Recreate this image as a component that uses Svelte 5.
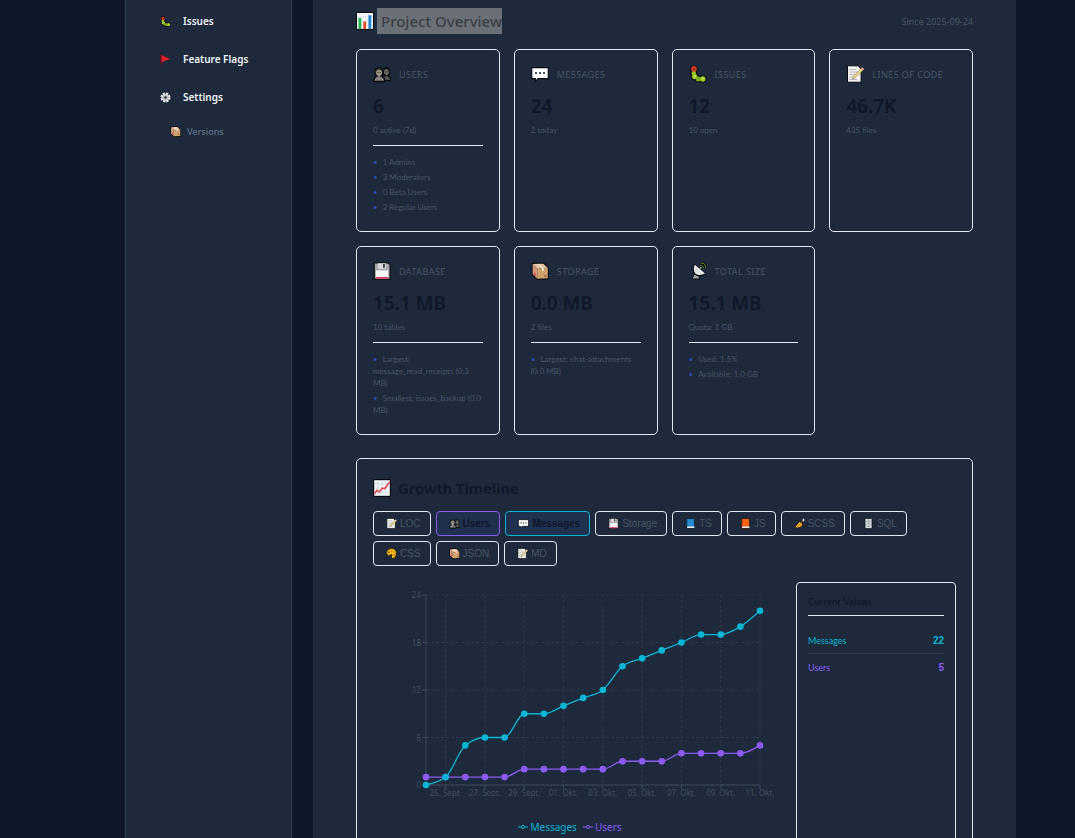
<script>
  const nav = [
    { icon: 'bug', label: 'Issues' },
    { icon: 'flag', label: 'Feature Flags' },
    { icon: 'gear', label: 'Settings' }
  ];

  const stats = [
    { icon: 'users', label: 'Users', value: '6', note: '0 active (7d)', items: ['1 Admins', '3 Moderators', '0 Beta Users', '2 Regular Users'] },
    { icon: 'speech', label: 'Messages', value: '24', note: '2 today', items: [] },
    { icon: 'bug', label: 'Issues', value: '12', note: '10 open', items: [] },
    { icon: 'memo', label: 'Lines of Code', value: '46.7K', note: '435 files', items: [] },
    { icon: 'floppy', label: 'Database', value: '15.1 MB', note: '10 tables', items: ['Largest: message_read_receipts (0.3 MB)', 'Smallest: issues_backup (0.0 MB)'] },
    { icon: 'box', label: 'Storage', value: '0.0 MB', note: '2 files', items: ['Largest: chat-attachments (0.0 MB)'] },
    { icon: 'dish', label: 'Total Size', value: '15.1 MB', note: 'Quota: 1 GB', items: ['Used: 1.5%', 'Available: 1.0 GB'] }
  ];

  let filters = $state([
    { icon: 'memo', label: 'LOC', on: false },
    { icon: 'users', label: 'Users', on: true, tone: 'violet' },
    { icon: 'speech', label: 'Messages', on: true, tone: 'cyan' },
    { icon: 'floppy', label: 'Storage', on: false },
    { icon: 'bluebook', label: 'TS', on: false },
    { icon: 'orangebook', label: 'JS', on: false },
    { icon: 'brush', label: 'SCSS', on: false },
    { icon: 'cabinet', label: 'SQL', on: false },
    { icon: 'palette', label: 'CSS', on: false },
    { icon: 'box', label: 'JSON', on: false },
    { icon: 'memo', label: 'MD', on: false }
  ]);

  const left = 53;
  const right = 387;
  const top = 13;
  const bottom = 203;
  const px = (i) => left + (i * (right - left)) / 17;
  const py = (v) => bottom - (v * (bottom - top)) / 24;

  const messages = [0, 1, 5, 6, 6, 9, 9, 10, 11, 12, 15, 16, 17, 18, 19, 19, 20, 22];
  const users = [1, 1, 1, 1, 1, 2, 2, 2, 2, 2, 3, 3, 3, 4, 4, 4, 4, 5];
  const series = [
    { name: 'Users', color: '#8b5cf6', points: users },
    { name: 'Messages', color: '#06b6d4', points: messages }
  ];
  const totals = [
    { name: 'Messages', color: '#06b6d4', value: 22 },
    { name: 'Users', color: '#8b5cf6', value: 5 }
  ];
  const yTicks = [0, 6, 12, 18, 24];
  const xTicks = ['25. Sept.', '27. Sept.', '29. Sept.', '01. Okt.', '03. Okt.', '05. Okt.', '07. Okt.', '09. Okt.', '11. Okt.'];

  // Monotone cubic interpolation, so flat stretches never overshoot.
  function curve(values) {
    const n = values.length;
    const h = px(1) - px(0);
    const ys = values.map(py);
    const s = ys.slice(1).map((y, i) => (y - ys[i]) / h);
    const m = ys.map((_, i) => {
      if (i === 0 || i === n - 1) return 0;
      const a = s[i - 1];
      const b = s[i];
      return (Math.sign(a) + Math.sign(b)) * Math.min(Math.abs(a), Math.abs(b), Math.abs(a + b) / 4);
    });
    m[0] = (3 * s[0] - m[1]) / 2;
    m[n - 1] = (3 * s[n - 2] - m[n - 2]) / 2;
    let d = `M${px(0)},${ys[0]}`;
    for (let i = 1; i < n; i++) {
      d += `C${px(i - 1) + h / 3},${ys[i - 1] + (m[i - 1] * h) / 3} ${px(i) - h / 3},${ys[i] - (m[i] * h) / 3} ${px(i)},${ys[i]}`;
    }
    return d;
  }
</script>

{#snippet glyph(name)}
  <svg class="glyph" viewBox="0 0 18 18" aria-hidden="true">
    {#if name === 'bug'}
      <g stroke="#0b0f14" stroke-width="2">
        <circle cx="5" cy="4" r="2.8" /><circle cx="4.8" cy="8" r="2.6" /><circle cx="5.6" cy="11.8" r="2.7" /><circle cx="9.2" cy="14" r="2.6" /><circle cx="13.8" cy="14" r="2.7" />
      </g>
      <circle cx="4.8" cy="8" r="2.3" fill="#8fbf26" /><circle cx="5.6" cy="11.6" r="2.6" fill="#a5cf2e" /><circle cx="9.3" cy="14" r="2.5" fill="#7fae1d" /><circle cx="13.8" cy="14" r="2.7" fill="#9bcb2b" />
      <circle cx="5" cy="4" r="2.8" fill="#e5402b" /><circle cx="5.2" cy="4.2" r="1" fill="#571812" /><path d="M3 1.6L4 2.4M7 1.4L6 2.4" stroke="#d9402b" stroke-width=".8" />
      <circle cx="6" cy="11.2" r=".8" fill="#d8ef72" /><circle cx="13.9" cy="13.5" r=".9" fill="#d2ec65" />
    {:else if name === 'flag'}
      <path d="M1.4 1v16" stroke="#0b0f14" stroke-width="2.6" /><path d="M2 1.5L17 8L2 14z" fill="#dc2331" stroke="#5c1825" stroke-width=".6" /><path d="M1.7 1v16" stroke="#a71926" stroke-width="1.5" />
    {:else if name === 'gear'}
      <circle cx="9" cy="9" r="7" fill="#c9cdd0" stroke="#0b0f14" stroke-width="1" />
      <circle cx="9" cy="9" r="6.8" fill="none" stroke="#e2e4e6" stroke-width="3" stroke-dasharray="3.6 1.74" />
      <circle cx="9" cy="9" r="4" fill="none" stroke="#b6bbbf" stroke-width="1" /><circle cx="9" cy="9" r="2" fill="#18212d" />
    {:else if name === 'box'}
      <path d="M1.2 1.4L12.6 1.2L17 5.8V16.8L6.2 17.2L1.2 12.4z" fill="#0b0f14" stroke="#0b0f14" stroke-width="1.4" stroke-linejoin="round" />
      <path d="M1.6 2L12.2 1.7L16.8 6L6.2 6.8z" fill="#e8c4a5" /><path d="M1.6 2L6.2 6.8V16.8L1.6 12z" fill="#d09a7a" /><path d="M6.2 6.8L16.8 6V16.3L6.2 16.8z" fill="#cfa270" />
      <path d="M6.2 1.9L11 6.4V9L12.8 8.8V6.3L8 1.8z" fill="#f3dfd0" /><path d="M3 10l2 2v2.6l-2-2z" fill="#d8505a" /><path d="M13 14h2.6" stroke="#77502e" />
    {:else if name === 'bars'}
      <rect x=".5" y=".5" width="17" height="17" fill="#f4f8fa" stroke="#080b10" />
      <path d="M1 5h16M1 9h16M1 13h16" stroke="#c8dce4" stroke-width=".7" />
      <path d="M2.5 6h2.8v11H2.5z" fill="#23b34b" /><path d="M7.3 9.5h2.8V17H7.3z" fill="#e34a2f" /><path d="M12.4 3.2h2.9V17h-2.9z" fill="#2587cf" />
    {:else if name === 'users'}
      <path d="M9.4 15.6c.1-3.4 1-4.4 2.8-5.1-2.8-2.2-2.2-7.8 1-7.8 3.7 0 4.6 5.6 1.7 7.8 2 .6 2.8 1.9 2.8 5.1z" fill="#55534f" stroke="#080a0d" stroke-width="1.4" />
      <path d="M.7 16.5c.1-3.4 1-4.6 3.2-5.4C.6 8.4 1.6 2.8 6 2.8s5.2 5.6 2.2 8.3c2.4.8 3.6 2 3.7 5.4z" fill="#85837f" stroke="#080a0d" stroke-width="1.5" />
      <path d="M2.8 6.8C3 3 9 3 9.2 6.8" fill="none" stroke="#2f2f2e" stroke-width="1.6" />
      <circle cx="6" cy="7.8" r="2.8" fill="#9b9687" /><circle cx="13.4" cy="7.2" r="2.4" fill="#696962" /><path d="M4.2 7.4h1.2m1.3 0h1.1M12 6.9h.8m1.2 0h1" stroke="#24272a" />
    {:else if name === 'speech'}
      <path d="M.7 2.7h16.6v11H7L4.3 16.5V13.7H.7z" fill="#fff" stroke="#080b10" stroke-width="1.2" />
      <circle cx="5" cy="8" r="1" fill="#11151c" /><circle cx="9" cy="8" r="1" fill="#11151c" /><circle cx="13" cy="8" r="1" fill="#11151c" />
    {:else if name === 'memo'}
      <path d="M1.5.8h10.6l3 3.2v13.2H1.5z" fill="#f6f4f3" stroke="#080b10" />
      <path d="M3.2 4.5h7.3M3.2 7h9M3.2 9.5h7M3.2 12h5M3.2 14.5h8" stroke="#aaa8b0" stroke-width=".8" />
      <path d="M6.3 14l1.1-3.1L15.5 3l2 1.7L9.2 12.9z" fill="#e7d389" stroke="#72653e" stroke-width=".4" /><path d="M15.2 3.3l1-1 2 1.7-1 1z" fill="#e2a1a1" />
    {:else if name === 'floppy'}
      <path d="M1.2 1h14.3l1.6 1.8v14.4H1.2z" fill="#aaa9ad" stroke="#080b10" stroke-width="1.2" />
      <path d="M5 1.3h8v5.4H5z" fill="#d8d8da" /><path d="M10 2h1.9v3.7H10z" fill="#363b42" /><path d="M3 8.4h12.2v8H3z" fill="#f8f5f5" /><path d="M3 15h12.2v1.7H3z" fill="#d83a63" />
    {:else if name === 'dish'}
      <path d="M3 17L5 12l4.5 1 1.3 4z" fill="#9aa0a3" stroke="#080b10" />
      <path d="M5.2 2.6L15.8 12c-2.6 2-7 2.3-9.6.2C3.8 10 3.8 5.4 5.2 2.6z" fill="#e3e5e6" stroke="#080b10" stroke-width="1.1" />
      <path d="M5.6 3.4L15.3 11.8" stroke="#fff" stroke-width="1.2" /><path d="M10.3 7.5L12.5 5" stroke="#c0c4c6" />
      <path d="M11.4 3.6c1.8-.3 3 .9 2.8 2.6M11.8 1.2c3.2-.5 5.2 1.6 4.9 4.8" fill="none" stroke="#0b0f14" stroke-width="2.4" />
      <path d="M11.4 3.6c1.8-.3 3 .9 2.8 2.6M11.8 1.2c3.2-.5 5.2 1.6 4.9 4.8" fill="none" stroke="#628d24" stroke-width="1" />
    {:else if name === 'growth'}
      <rect x=".6" y=".6" width="16.8" height="16.8" fill="#f5f7f7" stroke="#080b10" stroke-width="1.2" />
      <path d="M1 5h16M1 9h16M1 13h16M5 1v16M9 1v16M13 1v16" stroke="#c5d9df" stroke-width=".7" />
      <path d="M1.4 14.7L4 11.3 6.3 13 9.2 9.1l2.3.7L16.7 3" fill="none" stroke="#e24450" stroke-width="1.5" />
    {:else if name === 'bluebook' || name === 'orangebook'}
      <path d="M2.5 1h13v16H2.5z" fill={name === 'bluebook' ? '#278bd0' : '#f36313'} stroke="#0b1119" /><path d="M3.5 13.8h12v2.6h-12z" fill="#e4e9ed" /><path d="M3.8 1.7v12" stroke={name === 'bluebook' ? '#1b659f' : '#b9430d'} stroke-width="1.2" />
    {:else if name === 'brush'}
      <path d="M10 8l5-6 1.8 1.3-4.7 6z" fill="#ad6b35" stroke="#0b0f14" /><path d="M14.2 1.2h2.6v4h-2.3z" fill="#e5e8e9" />
      <path d="M.8 15.6L9 5.6 14.4 9.8c-.5 5-6 7.6-13.6 5.8z" fill="#f5b323" stroke="#0b0f14" stroke-width="1.2" /><path d="M5 14.6l5.4-5.2M8.3 15l4-4" stroke="#9b6d17" stroke-width=".9" />
    {:else if name === 'cabinet'}
      <path d="M3.4.8h11.3v16.4H3.4z" fill="#d6dadd" stroke="#080b10" /><path d="M4.6 5.8h9M4.6 11h9" stroke="#9ba3a8" stroke-width="1" /><path d="M7.7 3.4h3M7.7 8.4h3M7.7 13.7h3" stroke="#656e75" stroke-width="1.2" />
    {:else if name === 'palette'}
      <path d="M1 8C1 3.8 4.8 1 9.5 1 14 1 17 4 17 8c0 5-2.4 9-5.6 9-2.6 0-3.2-2-1.8-4.2 1-1.5-.8-3-2.5-1.5C5 13.4 1 11.6 1 8z" fill="#fbb913" stroke="#0b0f14" />
      <circle cx="5" cy="7" r="1.2" fill="#303a53" /><circle cx="9" cy="4.4" r="1" fill="#df6e31" /><circle cx="13.3" cy="6.4" r="1.1" fill="#6c9d37" /><circle cx="13.5" cy="11" r="1.2" fill="#785a26" />
    {/if}
  </svg>
{/snippet}

<div class="shell">
  <nav class="sidebar">
    {#each nav as item}
      <a class="link" href="#{item.icon}">{@render glyph(item.icon)}<span>{item.label}</span></a>
    {/each}
    <a class="link sub" href="#versions">{@render glyph('box')}<span>Versions</span></a>
  </nav>

  <main>
    <header>
      <h1>{@render glyph('bars')}<span>Project Overview</span></h1>
      <span class="since">Since 2025-09-24</span>
    </header>

    <section class="stats">
      {#each stats as stat}
        <article class="card">
          <h2>{@render glyph(stat.icon)}<span>{stat.label}</span></h2>
          <p class="value">{stat.value}</p>
          <p class="note">{stat.note}</p>
          {#if stat.items.length}
            <ul>
              {#each stat.items as line}<li>{line}</li>{/each}
            </ul>
          {/if}
        </article>
      {/each}
    </section>

    <section class="card timeline">
      <h3>{@render glyph('growth')}<span>Growth Timeline</span></h3>
      <div class="filters">
        {#each filters as f}
          <button type="button" class={f.on ? `on ${f.tone ?? ''}` : ''} aria-pressed={f.on} onclick={() => (f.on = !f.on)}>
            {@render glyph(f.icon)}<span>{f.label}</span>
          </button>
        {/each}
      </div>

      <div class="body">
        <div class="plot">
          <svg class="chart" viewBox="0 0 408 222" role="img" aria-label="Growth of messages and users">
            <g class="grid">
              {#each yTicks as t}<path d="M{left},{py(t)}H{right}" />{/each}
              {#each xTicks as _, i}<path d="M{px(i * 2 + 1)},{top}V{bottom}" />{/each}
            </g>
            <g class="axis">
              <path d="M{left},{top}V{bottom}H{right}" />
              {#each yTicks as t}<path d="M{left - 4},{py(t)}H{left}" />{/each}
              {#each xTicks as _, i}<path d="M{px(i * 2 + 1)},{bottom}v4" />{/each}
            </g>
            <g class="ticks">
              {#each yTicks as t}<text x={left - 5} y={py(t) + 3} text-anchor="end">{t}</text>{/each}
              {#each xTicks as t, i}<text x={px(i * 2 + 1)} y={bottom + 11} text-anchor="middle">{t}</text>{/each}
            </g>
            {#each series as s}
              <path d={curve(s.points)} fill="none" stroke={s.color} stroke-width="1.3" />
              {#each s.points as v, i}<circle cx={px(i)} cy={py(v)} r="3.3" fill={s.color} />{/each}
            {/each}
          </svg>
          <div class="legend">
            {#each totals as t}
              <span style:color={t.color}>
                <svg viewBox="0 0 10 10" aria-hidden="true"><path d="M0 5h3M7 5h3" stroke="currentColor" /><circle cx="5" cy="5" r="1.6" fill="none" stroke="currentColor" /></svg>{t.name}
              </span>
            {/each}
          </div>
        </div>

        <aside>
          <h4>Current Values</h4>
          <dl>
            {#each totals as t}
              <div style:color={t.color}><dt>{t.name}</dt><dd>{t.value}</dd></div>
            {/each}
          </dl>
        </aside>
      </div>
    </section>
  </main>
</div>

<style>
  :global(body) {
    margin: 0;
    background: #0f172a;
  }
  .shell {
    box-sizing: border-box;
    display: grid;
    grid-template-columns: 167px minmax(0, 1fr);
    gap: 21px;
    height: 100vh;
    overflow: hidden;
    padding: 0 59px 0 125px;
    font-family: "Noto Sans", "Open Sans", sans-serif;
    color: #0f172a;
  }
  h1, h2, h3, h4, p, ul, dl, dd {
    margin: 0;
    padding: 0;
  }
  .glyph {
    flex: none;
    width: 18px;
    height: 18px;
  }
  .sidebar {
    box-sizing: border-box;
    display: flex;
    flex-direction: column;
    padding: 2px 12px 0;
    background: #1e293b;
    border: solid #334155;
    border-width: 0 1px;
  }
  .link {
    display: flex;
    align-items: center;
    gap: 12px;
    height: 38px;
    padding-left: 22px;
    font-size: 10px;
    font-weight: 600;
    color: #f1f5f9;
    text-decoration: none;
  }
  .link .glyph {
    width: 11px;
    height: 11px;
  }
  .sub {
    height: 31px;
    gap: 6px;
    padding-left: 32px;
    font-size: 9px;
    font-weight: 500;
    color: #64748b;
  }
  main {
    min-height: 100vh;
    padding: 8px 43px;
    background: #1e293b;
  }
  header {
    display: flex;
    align-items: center;
    justify-content: space-between;
    margin-bottom: 15px;
  }
  h1 {
    display: flex;
    align-items: center;
    gap: 3px;
    font-size: 15px;
    font-weight: 500;
    line-height: 26px;
    color: #3b3e43;
  }
  h1 span {
    padding-left: 4px;
    background: #6b7078;
  }
  .since {
    font-size: 9px;
    color: #475569;
  }
  .stats {
    display: grid;
    grid-template-columns: repeat(auto-fill, minmax(140px, 1fr));
    gap: 14px;
  }
  .card {
    box-sizing: border-box;
    padding: 16px;
    border: 1px solid #e2e8f0;
    border-radius: 5px;
  }
  h2 {
    display: flex;
    align-items: center;
    gap: 8px;
    height: 16px;
    margin-bottom: 10px;
    font-size: 9px;
    font-weight: 400;
    letter-spacing: 0.05em;
    text-transform: uppercase;
    white-space: nowrap;
    color: #475569;
  }
  .value {
    font-size: 19px;
    font-weight: 600;
    line-height: 28px;
  }
  .note {
    margin-top: 4px;
    font-family: Lato, "Noto Sans", sans-serif;
    font-size: 8px;
    line-height: 12px;
    color: #475569;
  }
  .card ul {
    margin-top: 9px;
    padding-top: 10px;
    border-top: 1px solid #e2e8f0;
    list-style: none;
    font-family: Lato, "Noto Sans", sans-serif;
    font-size: 8px;
    line-height: 12px;
    color: #475569;
  }
  .card li {
    padding-bottom: 3px;
  }
  .card li:last-child {
    padding-bottom: 2px;
  }
  .card li::before {
    content: "•";
    margin-right: 5px;
    color: #2b4bb0;
  }
  .timeline {
    margin-top: 23px;
    padding-top: 19px;
  }
  h3 {
    display: flex;
    align-items: center;
    gap: 7px;
    font-size: 15px;
    font-weight: 600;
    line-height: 20px;
  }
  .filters {
    display: flex;
    flex-wrap: wrap;
    gap: 5px;
    margin: 13px 0 16px;
  }
  button {
    display: flex;
    align-items: center;
    gap: 3px;
    height: 25px;
    padding: 0 9px 0 12px;
    border: 1px solid #e2e8f0;
    border-radius: 4px;
    background: none;
    font: 10px "Liberation Sans", Arial, sans-serif;
    color: #475569;
  }
  button .glyph {
    width: 11px;
    height: 11px;
  }
  .on {
    background: #20304f;
    font-weight: 700;
    color: #0f172a;
  }
  .violet {
    border-color: #8b5cf6;
  }
  .cyan {
    border-color: #06b6d4;
  }
  .body {
    display: flex;
    gap: 15px;
  }
  .plot {
    flex: 1;
    min-width: 0;
  }
  .chart {
    display: block;
    width: 100%;
  }
  .grid path {
    stroke: #2b374a;
    stroke-dasharray: 3 2;
  }
  .axis path {
    fill: none;
    stroke: #3b485b;
  }
  .ticks text {
    font-size: 8px;
    fill: #414d60;
  }
  .legend {
    display: flex;
    justify-content: center;
    gap: 6px;
    margin-top: 14px;
    padding-right: 14px;
    font-size: 10px;
    line-height: 18px;
  }
  .legend span {
    display: flex;
    align-items: center;
    gap: 2px;
  }
  .legend svg {
    width: 10px;
    height: 10px;
  }
  aside {
    box-sizing: border-box;
    width: 160px;
    min-height: 290px;
    padding: 11px;
    border: 1px solid #e2e8f0;
    border-radius: 4px;
  }
  h4 {
    padding-bottom: 5px;
    border-bottom: 1px solid #e2e8f0;
    font-size: 9px;
    font-weight: 500;
    line-height: 16px;
  }
  dl {
    padding-top: 11px;
  }
  dl div {
    display: flex;
    align-items: center;
    justify-content: space-between;
    height: 26px;
    font-family: Lato, "Noto Sans", sans-serif;
    font-size: 9px;
  }
  dl div + div {
    border-top: 1px solid #2a374a;
  }
  dd {
    font-family: "Liberation Sans", Arial, sans-serif;
    font-size: 10px;
    font-weight: 700;
  }
</style>
